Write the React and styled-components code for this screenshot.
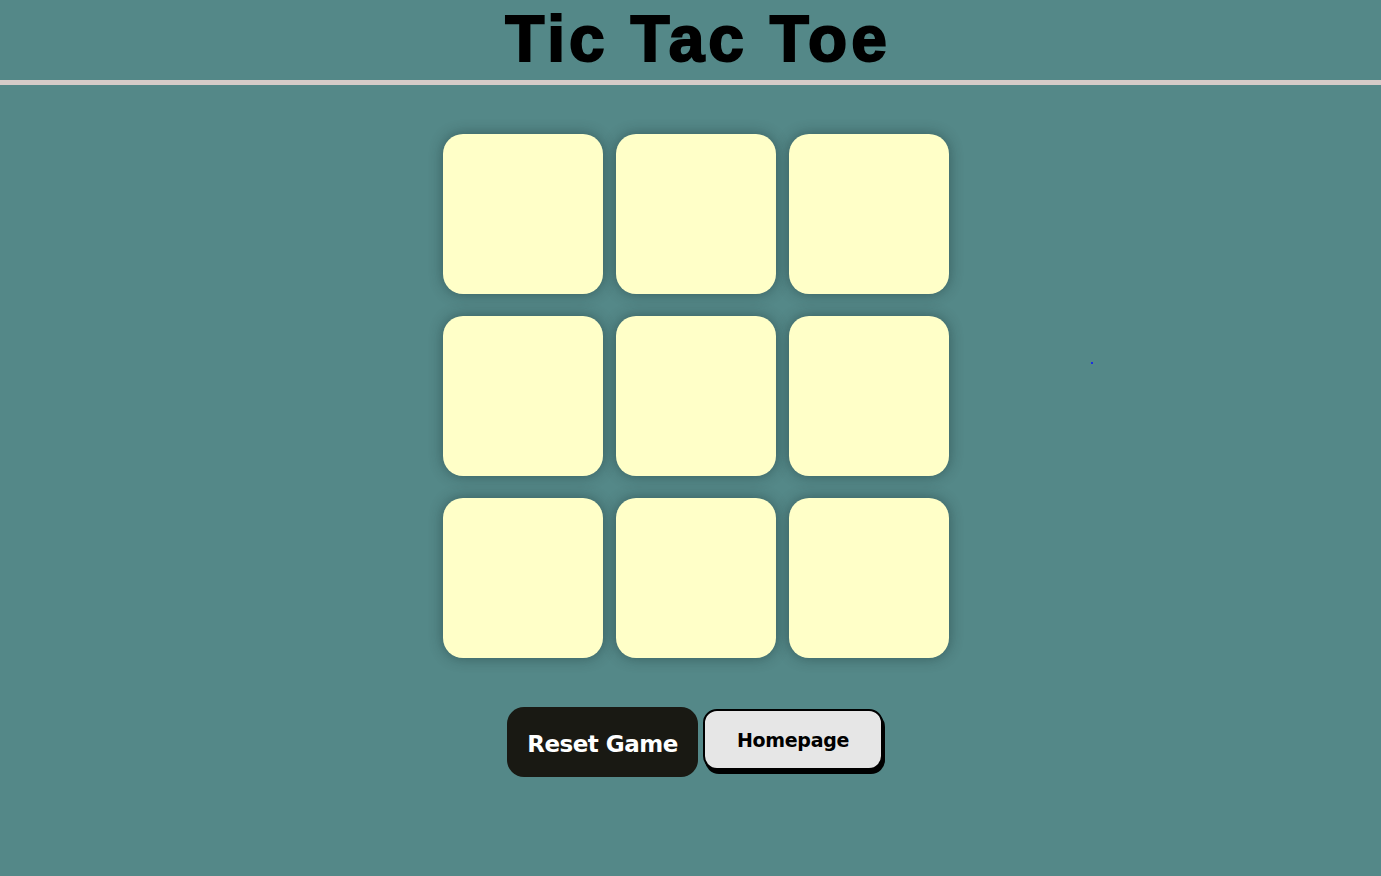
import React from "react";
import styled, { createGlobalStyle } from "styled-components";

const Global = createGlobalStyle`
  html, body { margin: 0; padding: 0; background: #548888; }
  body { font-family: "Liberation Sans", Arial, sans-serif; }
`;

const Page = styled.div`
  min-height: 876px;
  background: #548888;
  position: relative;
`;

const Header = styled.header`
  display: flex;
  justify-content: center;
  padding-left: 15px;
  height: 80px;
  border-bottom: 5px solid #d5cbc8;
  box-sizing: content-box;
`;

const Title = styled.h1`
  margin: 0;
  font-family: "Liberation Sans", Arial, sans-serif;
  font-weight: 700;
  font-size: 64px;
  letter-spacing: 4px;
  line-height: 80px;
  color: #000;
  -webkit-text-stroke: 2px #000;
  transform: translateY(-1px);
`;

const Board = styled.div`
  display: grid;
  grid-template-columns: repeat(3, 160px);
  column-gap: 13px;
  row-gap: 22px;
  justify-content: center;
  padding-left: 11px;
  margin-top: 49px;
`;

const Cell = styled.button`
  width: 160px;
  height: 160px;
  border: none;
  border-radius: 20px;
  background: #ffffc8;
  box-shadow: 0 0 14px rgba(20, 40, 40, 0.45);
  cursor: pointer;
  padding: 0;
`;

const Actions = styled.div`
  display: flex;
  justify-content: center;
  align-items: flex-start;
  gap: 5px;
  padding-left: 9px;
  margin-top: 49px;
`;

const ResetButton = styled.button`
  width: 191px;
  height: 70px;
  border: none;
  border-radius: 17px;
  background: #191913;
  color: #fff;
  font-family: "DejaVu Sans", Verdana, sans-serif;
  font-weight: 700;
  font-size: 23px;
  letter-spacing: -0.5px;
  cursor: pointer;
  padding: 4px 0 0 0;
`;

const HomeButton = styled.button`
  margin-top: 2px;
  width: 180px;
  height: 61px;
  border: 2px solid #000;
  border-radius: 14px;
  background: #e6e6e6;
  color: #000;
  box-shadow: 2px 4px 0 #000;
  font-family: "DejaVu Sans", Verdana, sans-serif;
  font-weight: 700;
  font-size: 19px;
  letter-spacing: -0.3px;
  cursor: pointer;
  padding: 0;
`;

const Dot = styled.span`
  position: absolute;
  left: 1091px;
  top: 362px;
  width: 2px;
  height: 2px;
  background: #1a2ee0;
`;

export default function App() {
  const cells = Array.from({ length: 9 });
  return (
    <Page>
      <Global />
      <Header>
        <Title>Tic Tac Toe</Title>
      </Header>
      <Board>
        {cells.map((_, i) => (
          <Cell key={i} aria-label={`cell ${i + 1}`} />
        ))}
      </Board>
      <Actions>
        <ResetButton>Reset Game</ResetButton>
        <HomeButton>Homepage</HomeButton>
      </Actions>
      <Dot />
    </Page>
  );
}
